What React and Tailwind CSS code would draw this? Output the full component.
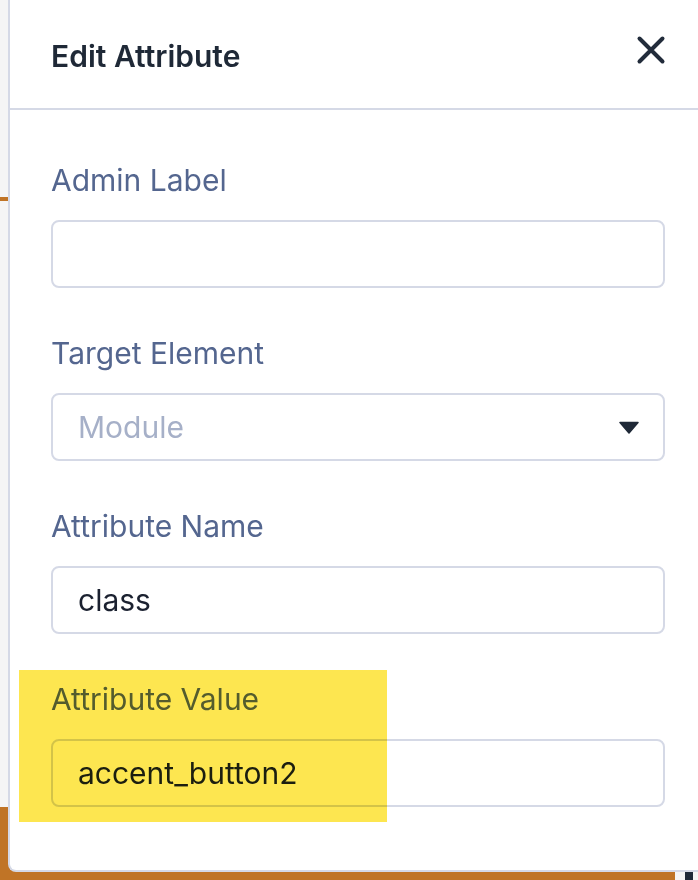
import React from 'react';

const fields = [
  { label: 'Admin Label', value: '', kind: 'input' },
  { label: 'Target Element', value: 'Module', kind: 'select' },
  { label: 'Attribute Name', value: 'class', kind: 'input' },
  { label: 'Attribute Value', value: 'accent_button2', kind: 'input' },
];

function Field({ label, value, kind }) {
  return (
    <div className="mb-[47px]">
      <div className="h-[36px] leading-[36px] text-[30px] text-[#54668f] mb-[22px]">{label}</div>
      <div className="w-[614px] h-[68px] border-2 border-[#d5d9e6] rounded-[8px] bg-white flex items-center pl-[25px] pr-[24px]">
        {kind === 'select' ? (
          <>
            <span className="flex-1 text-[30px] text-[#a6b0c8]">{value}</span>
            <svg width="20" height="13" viewBox="0 0 20 13">
              <path d="M1 1.5 L19 1.5 L10 12 Z" fill="#1f2937" stroke="#1f2937" strokeWidth="1.5" strokeLinejoin="round" />
            </svg>
          </>
        ) : (
          <span className="text-[30px] text-[#1b2130]">{value}</span>
        )}
      </div>
    </div>
  );
}

export default function App() {
  return (
    <div className="relative w-[698px] h-[880px] overflow-hidden bg-[#f5f5f5]" style={{ fontFamily: 'Inter, "Noto Sans", sans-serif' }}>
      {/* page behind the drawer */}
      <div className="pt-[197px]">
        <div className="h-[4px] w-full bg-[#c07426]" />
        <div className="mt-[606px] flex h-[73px]">
          <div className="w-[675px] bg-[#c07426]" />
          <div className="w-[10px]" />
          <div className="w-[8px] bg-[#1f2a38]" />
        </div>
      </div>

      {/* drawer */}
      <div className="absolute left-[8px] top-0 w-[720px] h-[872px] bg-white border-l-2 border-b-2 border-[#d5d9e6] rounded-bl-[8px]">
        <div className="h-[110px] border-b-2 border-[#d5d9e6] flex items-center pl-[41px]">
          <div className="w-[614px] flex items-center justify-between">
            <h2 className="text-[30px] font-semibold text-[#1f2937] mt-[4px]">Edit Attribute</h2>
            <svg width="30" height="30" viewBox="0 0 30 30" className="mr-[-1px] mt-[-8px]">
              <path d="M3.5 3.5 L26.5 26.5 M26.5 3.5 L3.5 26.5" stroke="#222c3b" strokeWidth="4" strokeLinecap="round" />
            </svg>
          </div>
        </div>
        <div className="pl-[41px] pt-[52px]">
          {fields.map((f) => (
            <Field key={f.label} {...f} />
          ))}
        </div>
      </div>

      {/* highlighter mark */}
      <div className="absolute left-[19px] top-[670px] w-[368px] h-[152px] bg-[#fde650] mix-blend-multiply" />
    </div>
  );
}
